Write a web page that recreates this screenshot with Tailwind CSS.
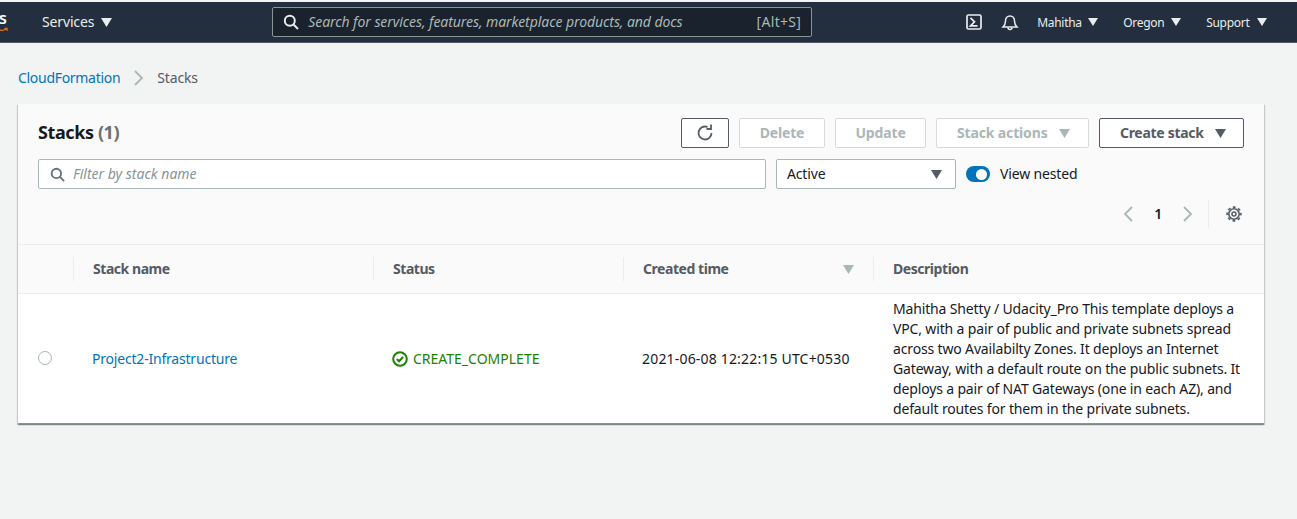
<!DOCTYPE html>
<html lang="en">
<head>
  <meta charset="UTF-8">
  <title>Stacks - CloudFormation</title>
  <script src="https://cdn.jsdelivr.net/npm/@tailwindcss/browser@4"></script>
</head>
<body class="h-[519px] w-[1297px] overflow-hidden bg-[#f2f3f3] font-['Noto_Sans','Open_Sans',sans-serif] text-[14px] tracking-[-0.15px] text-[#16191f]">
  <!-- Top nav -->
  <div class="mt-[2px] flex h-[41px] items-center border-b border-[#545b64] bg-[#232f3e] text-[#eaeded]">
    <div class="relative h-full w-[42px] shrink-0 overflow-hidden">
      <span class="absolute left-[-1px] top-[6px] text-[16px] font-semibold leading-[20px] text-white">s</span>
      <svg class="absolute left-0 top-[23px]" width="8" height="8" viewBox="0 0 8 8" fill="none" stroke="#ec7211" stroke-width="1.3"><path d="M0 5c2 .6 4 .3 6-1M4.500 3.500H7V6"/></svg>
    </div>
    <span class="pb-[2px] text-[14px]">Services</span>
    <svg class="ml-[7px]" width="11" height="9" viewBox="0 0 11 9" fill="#eaeded"><path d="M0 0h11L5.500 9z"/></svg>
    <div class="ml-[160px] flex h-[30px] w-[540px] items-center rounded-[2px] border border-[#879596] bg-[#1a222d] pl-[10px] pr-[10px]">
      <svg width="16" height="16" viewBox="0 0 16 16" fill="none" stroke="#eaeded" stroke-width="2"><circle cx="6.800" cy="6.800" r="5"/><path d="M10.500 10.500l4.500 4.500"/></svg>
      <span class="ml-[9px] flex-1 pb-[2px] text-[14px] italic tracking-[-0.07px] text-[#aab7b8]">Search for services, features, marketplace products, and docs</span>
      <span class="pb-[2px] text-[14px] tracking-[0.3px] text-[#aab7b8]">[Alt+S]</span>
    </div>
    <svg class="ml-[154px]" width="16" height="16" viewBox="0 0 16 16" fill="none" stroke="#eaeded" stroke-width="1.700"><rect x="1" y="1" width="14" height="14" rx="1.500"/><path d="M4.500 3.800L8.500 7.800 4.500 11.800h7"/></svg>
    <svg class="ml-[19px]" width="18" height="18" viewBox="0 0 18 18" fill="none" stroke="#eaeded" stroke-width="1.500"><path d="M2 14h14c-2-2-2.500-3-2.500-6 0-3-2-5-4.500-5S4.500 5 4.500 8c0 3-.5 4-2.500 6z"/><path d="M7 14.500a2 2 0 0 0 4 0"/></svg>
    <span class="ml-[18px] w-[44px] pt-[2px] text-[12px] tracking-[-0.3px]">Mahitha</span>
    <svg class="ml-[7px]" width="10" height="8" viewBox="0 0 10 8" fill="#eaeded"><path d="M0 0h10L5 8z"/></svg>
    <span class="ml-[25px] w-[41px] pt-[2px] text-[12px] tracking-[-0.3px]">Oregon</span>
    <svg class="ml-[7px]" width="10" height="8" viewBox="0 0 10 8" fill="#eaeded"><path d="M0 0h10L5 8z"/></svg>
    <span class="ml-[25px] w-[44px] pt-[2px] text-[12px] tracking-[-0.3px]">Support</span>
    <svg class="ml-[7px]" width="10" height="8" viewBox="0 0 10 8" fill="#eaeded"><path d="M0 0h10L5 8z"/></svg>
  </div>

  <!-- Breadcrumb -->
  <div class="flex h-[61px] items-center pl-[18px] pt-[8px]">
    <a href="#" class="tracking-[-0.3px] text-[#0073bb]">CloudFormation</a>
    <svg class="ml-[14px]" width="10" height="16" viewBox="0 0 10 16" fill="none" stroke="#aab7b8" stroke-width="1.800"><path d="M1 1l7 7-7 7"/></svg>
    <span class="ml-[13px] text-[#545b64]">Stacks</span>
  </div>

  <!-- Card -->
  <div class="ml-[18px] w-[1246px] border-b border-[#879596] bg-white shadow-[0_1px_1px_0_rgba(0,28,36,0.3),1px_1px_1px_0_rgba(0,28,36,0.15),-1px_1px_1px_0_rgba(0,28,36,0.15)]">
    <div class="h-[141px] border-b border-[#eaeded] bg-[#fafafa] px-[20px]">
      <div class="flex items-center pt-[14px]">
        <h1 class="pb-[2px] text-[18px] font-bold leading-[28px] tracking-[-0.4px]">Stacks <span class="text-[#687078]">(1)</span></h1>
        <button class="ml-auto flex h-[30px] w-[48px] items-center justify-center rounded-[2px] border border-[#545b64] bg-white">
          <svg width="18" height="18" viewBox="0 0 18 18" fill="none" stroke="#545b64" stroke-width="1.800"><path d="M15.500 9A6.500 6.500 0 1 1 11.500 3"/><path d="M12 0v4.500H7.500" transform="translate(3 .5)"/></svg>
        </button>
        <button class="ml-[10px] h-[30px] w-[86px] rounded-[2px] border border-[#d5dbdb] bg-white pb-[2px] font-bold text-[#aab7b8]">Delete</button>
        <button class="ml-[10px] h-[30px] w-[91px] rounded-[2px] border border-[#d5dbdb] bg-white pb-[2px] font-bold text-[#aab7b8]">Update</button>
        <button class="ml-[10px] flex h-[30px] w-[153px] items-center rounded-[2px] border border-[#d5dbdb] bg-white pl-[20px] font-bold text-[#aab7b8]"><span class="pb-[2px]">Stack actions</span>
          <svg class="ml-[11px]" width="11" height="9" viewBox="0 0 11 9" fill="#aab7b8"><path d="M0 0h11L5.500 9z"/></svg>
        </button>
        <button class="ml-[10px] flex h-[30px] w-[145px] items-center rounded-[2px] border border-[#545b64] bg-white pl-[20px] font-bold text-[#545b64]"><span class="pb-[2px] tracking-[-0.3px]">Create stack</span>
          <svg class="ml-[11px]" width="11" height="9" viewBox="0 0 11 9" fill="#545b64"><path d="M0 0h11L5.500 9z"/></svg>
        </button>
      </div>
      <div class="mt-[11px] flex items-center">
        <div class="flex h-[30px] w-[728px] items-center rounded-[2px] border border-[#aab7b8] bg-white pl-[11px]">
          <svg width="15" height="15" viewBox="0 0 16 16" fill="none" stroke="#687078" stroke-width="2"><circle cx="6.800" cy="6.800" r="5"/><path d="M10.500 10.500l4.500 4.500"/></svg>
          <span class="ml-[8px] pb-[2px] italic tracking-normal text-[#879596]">Filter by stack name</span>
        </div>
        <div class="ml-[10px] flex h-[30px] w-[180px] items-center justify-between rounded-[2px] border border-[#aab7b8] bg-white pl-[10px] pr-[13px]">
          <span class="pb-[2px]">Active</span>
          <svg width="11" height="9" viewBox="0 0 11 9" fill="#545b64"><path d="M0 0h11L5.500 9z"/></svg>
        </div>
        <span class="ml-[10px] flex h-[16px] w-[24px] items-center justify-end rounded-full bg-[#0073bb] pr-[3px]"><span class="h-[11px] w-[11px] rounded-full bg-white"></span></span>
        <span class="ml-[10px] pb-[2px]">View nested</span>
      </div>
      <div class="mt-[10px] flex h-[30px] items-center justify-end">
        <svg width="10" height="16" viewBox="0 0 10 16" fill="none" stroke="#aab7b8" stroke-width="1.800"><path d="M9 1L2 8l7 7"/></svg>
        <span class="mx-[21px] font-semibold leading-none">1</span>
        <svg width="10" height="16" viewBox="0 0 10 16" fill="none" stroke="#aab7b8" stroke-width="1.800"><path d="M1 1l7 7-7 7"/></svg>
        <span class="ml-[15px] h-[28px] w-px bg-[#eaeded]"></span>
        <svg class="ml-[17px] mr-[2px]" width="16" height="16" viewBox="0 0 16 16" fill="none" stroke="#545b64"><circle cx="8" cy="8" r="5.200" stroke-width="1.600"/><circle cx="8" cy="8" r="2" stroke-width="1.500"/><circle cx="8" cy="8" r="6.900" stroke-width="1.600" stroke-dasharray="2.800 2.620" stroke-dashoffset="1.400"/></svg>
      </div>
    </div>
    <!-- Table header -->
    <div class="grid h-[49px] grid-cols-[55px_300px_250px_250px_391px] items-center border-b border-[#eaeded] bg-[#fafafa] font-bold tracking-[-0.45px] text-[#545b64]">
      <div></div>
      <div class="flex h-[24px] items-center border-l border-[#eaeded] pl-[19px]"><span class="pb-[2px]">Stack name</span></div>
      <div class="flex h-[24px] items-center border-l border-[#eaeded] pl-[19px]"><span class="pb-[2px]">Status</span></div>
      <div class="flex h-[24px] items-center justify-between border-l border-[#eaeded] pl-[19px] pr-[19px]"><span class="pb-[2px]">Created time</span>
        <svg width="11" height="9" viewBox="0 0 11 9" fill="#aab7b8"><path d="M0 0h11L5.500 9z"/></svg>
      </div>
      <div class="flex h-[24px] items-center border-l border-[#eaeded] pl-[19px]"><span class="pb-[2px]">Description</span></div>
    </div>
    <!-- Row -->
    <div class="grid h-[129px] grid-cols-[55px_300px_250px_250px_391px] items-center">
      <div class="pb-[2px] pl-[20px]"><span class="block h-[14px] w-[14px] rounded-full border border-[#aab7b8] bg-white"></span></div>
      <div class="pl-[19px]"><a href="#" class="tracking-[-0.2px] text-[#0073bb]">Project2-Infrastructure</a></div>
      <div class="flex items-center pl-[19px] text-[#1d8102]">
        <svg width="16" height="16" viewBox="0 0 16 16" fill="none" stroke="#1d8102" stroke-width="2"><circle cx="8" cy="8" r="6.800"/><path d="M4.800 8l2.300 2.300 4-4.300"/></svg>
        <span class="ml-[5px] tracking-normal">CREATE_COMPLETE</span>
      </div>
      <div class="pl-[19px] tracking-[0.18px]">2021-06-08 12:22:15 UTC+0530</div>
      <div class="whitespace-nowrap pl-[20px] leading-[20px]">Mahitha Shetty / Udacity_Pro This template deploys a<br>VPC, with a pair of public and private subnets spread<br>across two Availabilty Zones. It deploys an Internet<br>Gateway, with a default route on the public subnets. It<br>deploys a pair of NAT Gateways (one in each AZ), and<br>default routes for them in the private subnets.</div>
    </div>
  </div>
</body>
</html>
